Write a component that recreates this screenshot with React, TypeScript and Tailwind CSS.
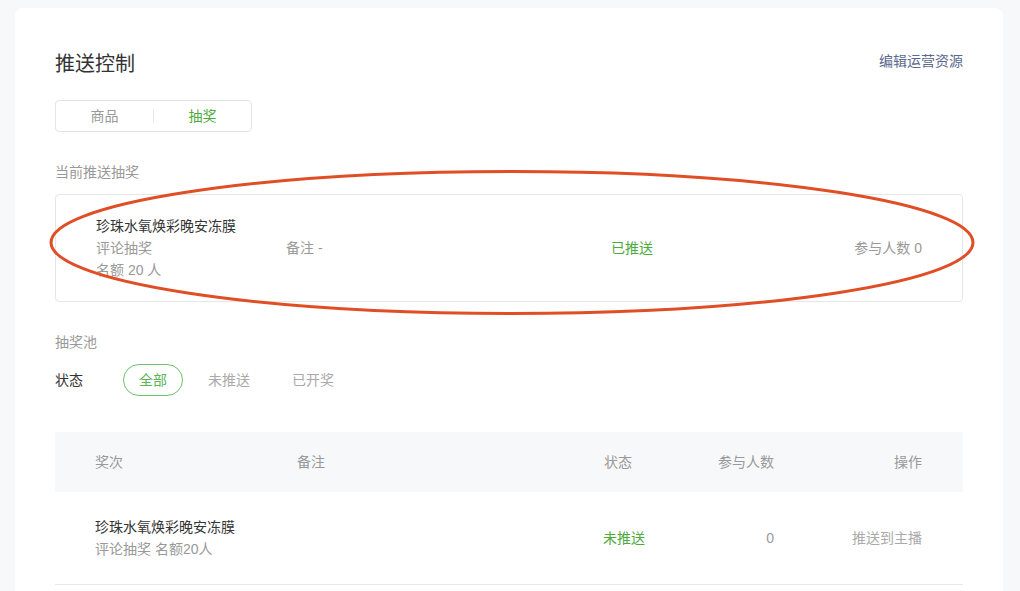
import React from "react";

const font = { fontFamily: '"Liberation Sans", "Noto Sans CJK SC", sans-serif' };

export default function App() {
  return (
    <div className="relative h-[591px] w-[1020px] overflow-hidden bg-[#f7f8fa] pt-2 pl-[15px] pr-[17px]" style={font}>
      <div className="h-[583px] rounded-t-lg bg-white px-10 pt-10">
        <div className="flex h-[30px] items-center justify-between">
          <div className="mt-[2px] text-[20px] text-[#333]">推送控制</div>
          <div className="-mt-1 text-[14px] text-[#5b6890]">编辑运营资源</div>
        </div>

        <div className="mt-[22px] flex h-8 w-[197px] items-center rounded border border-[#e4e4e4] text-[14px]">
          <div className="flex-1 text-center text-[#999]">商品</div>
          <div className="h-3 w-px bg-[#e4e4e4]" />
          <div className="flex-1 text-center text-[#4eaa3c]">抽奖</div>
        </div>

        <div className="mt-[30px] text-[14px] leading-5 text-[#999]">当前推送抽奖</div>

        <div className="mt-3 flex h-[108px] items-center rounded border border-[#e6e6e6] pl-10 pr-10 text-[14px] leading-[22px]">
          <div className="w-[190px]">
            <div className="text-[#333]">珍珠水氧焕彩晚安冻膜</div>
            <div className="text-[#999]">评论抽奖</div>
            <div className="text-[#999]">名额 20 人</div>
          </div>
          <div className="w-[325px] text-[#999]">备注 -</div>
          <div className="flex-1 text-[#4eaa3c]">已推送</div>
          <div className="text-[#999]">参与人数 0</div>
        </div>

        <div className="mt-[30px] text-[14px] leading-5 text-[#999]">抽奖池</div>

        <div className="mt-3 flex items-center text-[14px]">
          <div className="w-[68px] text-[#333]">状态</div>
          <div className="flex h-8 w-[60px] items-center justify-center rounded-full border border-[#6cc46a] text-[#5bb556]">全部</div>
          <div className="ml-[25px] text-[#aaa]">未推送</div>
          <div className="ml-[42px] text-[#aaa]">已开奖</div>
        </div>

        <div className="mt-9 text-[14px]">
          <div className="grid h-[60px] grid-cols-[202px_307px_86px_84px_148px] items-center bg-[#f7f8fa] px-10 text-[#999]">
            <div>奖次</div>
            <div>备注</div>
            <div>状态</div>
            <div className="text-right">参与人数</div>
            <div className="text-right">操作</div>
          </div>
          <div className="grid h-[93px] grid-cols-[202px_307px_86px_84px_148px] items-center border-b border-[#e8e8e8] px-10 leading-[22px]">
            <div className="col-span-2">
              <div className="text-[#333]">珍珠水氧焕彩晚安冻膜</div>
              <div className="text-[#999]">评论抽奖 名额20人</div>
            </div>
            <div className="-ml-px text-[#4eaa3c]">未推送</div>
            <div className="text-right text-[#999]">0</div>
            <div className="text-right text-[#aaa]">推送到主播</div>
          </div>
        </div>
      </div>

      <svg className="pointer-events-none absolute left-0 top-0" width="1020" height="591" viewBox="0 0 1020 591">
        <ellipse cx="512" cy="242.5" rx="461" ry="71" fill="none" stroke="#e04e26" strokeWidth="3" />
      </svg>
    </div>
  );
}
